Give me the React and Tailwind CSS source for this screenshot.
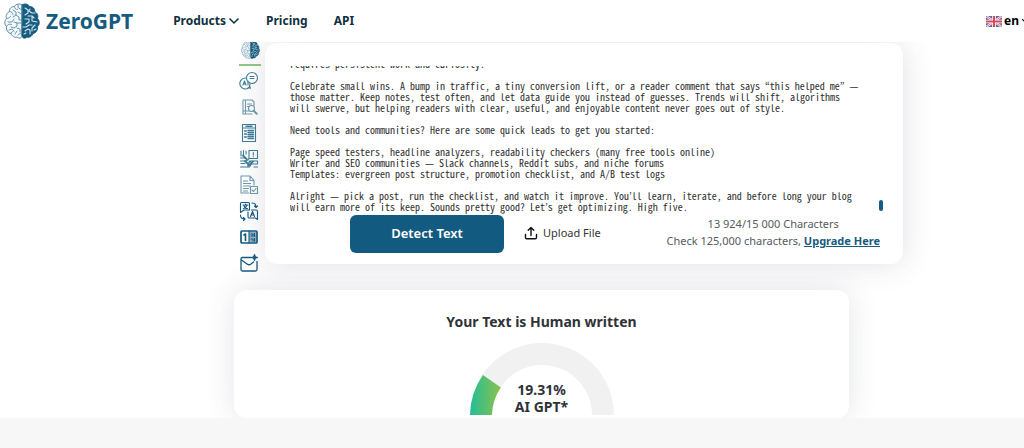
import React, { useEffect, useRef } from "react";

const text = `requires persistent work and curiosity.

Celebrate small wins. A bump in traffic, a tiny conversion lift, or a reader comment that says “this helped me” —
those matter. Keep notes, test often, and let data guide you instead of guesses. Trends will shift, algorithms
will swerve, but helping readers with clear, useful, and enjoyable content never goes out of style.

Need tools and communities? Here are some quick leads to get you started:

Page speed testers, headline analyzers, readability checkers (many free tools online)
Writer and SEO communities — Slack channels, Reddit subs, and niche forums
Templates: evergreen post structure, promotion checklist, and A/B test logs

Alright — pick a post, run the checklist, and watch it improve. You’ll learn, iterate, and before long your blog
will earn more of its keep. Sounds pretty good? Let’s get optimizing. High five.`;

const Brain = ({ className }) => (
  <svg viewBox="0 0 36 36" className={className} fill="none" strokeLinecap="round" strokeLinejoin="round" aria-hidden="true">
    <path
      d="M17.5 1.5C14 0 11 2 10.5 3.5 7 3.500 5 6 5.500 8.500 2.500 10 1.500 13 2.500 15.500 0 18 .5 22 2.500 23.500 2 27 4 30 7 30.500 8 33.500 11 35 13 34 15 36 17.500 35 17.500 34Z"
      fill="#f3f8fa"
      stroke="#5a8da6"
      strokeWidth="1"
    />
    <path
      d="M10.500 3.500c0 2 1 3 3 3M14 2v2.500l3 2M5.500 8.500c2 0 3 1 3.500 3M9 7l3 2v3l-3 2M2.500 15.500c2 0 3-1 4-2M14 9l3 2M12 12l3 2v3h2M4 19h4l2-3M2.500 23.500c1-2 3-3 5-2M10 19l3 1v3l-3 2-3-1M13 20h4M5 27l3-1 2 2M7 30.500c0-1 1-2 2-2M13 25l3 1v3M11 31l2-3M14 32l3-2"
      stroke="#5a8da6"
      strokeWidth=".9"
    />
    <path
      d="M18.500 1.500C22 0 25 2 25.500 3.500 29 3.500 31 6 30.500 8.500 33.500 10 34.500 13 33.500 15.500 36 18 35.500 22 33.500 23.500 34 27 32 30 29 30.500 28 33.500 25 35 23 34 21 36 18.500 35 18.500 34Z"
      fill="#165b80"
      stroke="#165b80"
    />
    <path
      d="M21 5l3 2v3l-3 2M26 6l-1 2 3 2h3M24 13h4l2 2M21 16h4v3l-3 2M28 14v4l5 1M19 24h3l3-2h3M31 22l-3 3v3M21 28l3-2 2 1v4M20 31l2-1M32 26l-2 1"
      stroke="#d5e6ed"
      strokeWidth="1.100"
    />
  </svg>
);

const tools = [
  {
    name: "AI chat",
    icon: (
      <>
        <circle cx="13" cy="7" r="5.500" />
        <path d="M11 5.500h4M11 7.500h4M6.500 7A5.500 5.500 0 1 0 11 15.500M11 12.500c0 1-.2 2-.6 2.700l1.100 2-2.500-.7" />
        <path d="M4 14l1.500-4L7 14M4.500 13h2M9 10v4" />
      </>
    ),
  },
  {
    name: "Plagiarism checker",
    color: "text-[#6d9bb1]",
    icon: (
      <>
        <path d="M13 17H4V3h9l2 2v4M6.500 3v13.500M8.500 7h4M8.500 9.500h2M4 14h6" />
        <circle cx="12.500" cy="11.500" r="3" fill="#fff" />
        <path d="M14.700 13.700l3 3" strokeWidth="2" />
      </>
    ),
  },
  {
    name: "Summarizer",
    icon: (
      <>
        <path d="M3.500 1.500h13v17h-13zM3.500 5h13" />
        <path d="M5.500 8h2M5.500 11h2M5.500 14h2M9 7.500h5.500M9 9.500h5.500M9 11.500h5.500M9 13.500h5.500M9 15.500h5.500M7 3.300h6" strokeWidth="1.400" />
      </>
    ),
  },
  {
    name: "Paraphraser",
    icon: (
      <>
        <path d="M10 1.500h8.500v8H10zM14.300 3.500v2.500M14.300 7.500v.3M2 2v5M4.500 1.500v5M7 2v3M1.500 9h5M1.500 12h6l2-2M2 14.500h4M1.500 18h9l2-3h6M10 12h8.500M9.500 14l2-1.500M15 18h3.500M18.500 12v2" />
        <path d="M4 6.500l3.500 3.500M9 17l5-4.500M6 12l3 3" strokeWidth="1.800" />
      </>
    ),
  },
  {
    name: "Grammar checker",
    color: "text-[#6d9bb1]",
    icon: (
      <>
        <path d="M15 10V5.500L11 1H2v17h8M11 1v4.500h4M4.500 6h4M4.500 8.500h7M4.500 11h7M4.500 13.500h5M4.500 16h4" />
        <rect x="11.500" y="11.500" width="7" height="7" />
        <path d="M13 15l1.500 1.500 2.500-3" />
      </>
    ),
  },
  {
    name: "Translator",
    color: "text-[#165b80]",
    icon: (
      <>
        <path d="M2.500 1.500h7a1 1 0 0 1 1 1V9H5l-3.500 2.500v-9a1 1 0 0 1 1-1zM12.500 9H17a1.500 1.500 0 0 1 1.500 1.500v8l-2-1.500H10a1 1 0 0 1-1-1v-5" />
        <path d="M4 4h5M6.500 3v1M8 4c-.5 2-2 3-3.500 3.500M5 5c.5 1.500 2 2.500 3.500 2.500M11.500 15.500l2-5 2 5M12.300 14h2.500M13 2c2.500 0 4 1 4 4M15.500 5L17 6.500 18.500 5M1.500 14c0 2.500 1.500 4 4 4M4.500 16.500L6 18l-1.500 1.500" />
      </>
    ),
  },
  {
    name: "Word counter",
    color: "text-[#165b80]",
    icon: (
      <>
        <path d="M10 4.500h7.500v11H10z" fill="#8db3c4" stroke="none" />
        <rect x="2" y="4" width="16" height="12" rx="1" strokeWidth="1.700" />
        <path d="M5 8l1.500-1v6.500" strokeWidth="1.600" />
        <path d="M10 4v12M12 7h2v2h-2M15.500 6.500v3M12 12h2v2M15.500 11.500v2.500" />
      </>
    ),
  },
  {
    name: "Email helper",
    color: "text-[#165b80]",
    icon: (
      <>
        <path d="M12 4.500H3.500A1.500 1.500 0 0 0 2 6v10.500A1.500 1.500 0 0 0 3.500 18h13a1.500 1.500 0 0 0 1.500-1.500V8.500M2.500 7l5.500 4q2 1.500 4 0l2.500-2" strokeWidth="1.300" />
        <path d="M15.500 1.500l.8 2.200 2.200.8-2.200.8-.8 2.200-.8-2.200-2.200-.8 2.200-.8z" fill="currentColor" />
      </>
    ),
  },
];

const Chevron = ({ className }) => (
  <svg viewBox="0 0 12 8" className={className} fill="none" stroke="currentColor" strokeWidth="1.500" aria-hidden="true">
    <path d="M1.500 1.500L6 6l4.500-4.500" />
  </svg>
);

const Header = () => (
  <header className="relative z-10 flex h-[42px] items-center overflow-hidden bg-white pl-1 text-[#12303f]">
    <a href="#home" className="flex items-center gap-[6px] text-[#165b80]">
      <Brain className="h-9 w-9" />
      <span className="text-[21px] leading-7 font-bold">ZeroGPT</span>
    </a>
    <nav className="ml-10 flex items-center gap-[26px] text-[12px] font-bold">
      <button type="button" className="flex items-center gap-[2px] font-bold">
        Products
        <Chevron className="h-2 w-3" />
      </button>
      <a href="#pricing">Pricing</a>
      <a href="#api">API</a>
    </nav>
    <button type="button" className="-mr-[6px] ml-auto flex shrink-0 items-center gap-[2px] text-[12px] font-bold text-black">
      <svg viewBox="0 0 16 11" className="h-[11px] w-4" aria-hidden="true">
        <path d="M0 0h16v11H0z" fill="#5b68a5" />
        <path d="M0 0l16 11M16 0L0 11" stroke="#fff" strokeWidth="2.200" />
        <path d="M0 0l16 11M16 0L0 11" stroke="#d9485a" strokeWidth=".8" />
        <path d="M8 0v11M0 5.500h16" stroke="#fff" strokeWidth="3.600" />
        <path d="M8 0v11M0 5.500h16" stroke="#d9485c" strokeWidth="2" />
      </svg>
      en
      <Chevron className="h-[6px] w-[9px]" />
    </button>
  </header>
);

const Sidebar = () => (
  <aside className="-mb-4 flex w-[22px] shrink-0 flex-col">
    <a href="#detector" aria-label="AI detector" className="-mt-[2px] flex justify-center border-b-2 border-[#8ccb86] pb-[5px]">
      <Brain className="h-[19px] w-[19px]" />
    </a>
    <div className="mt-[5px] flex flex-col gap-[6px]">
      {tools.map((tool) => (
        <a key={tool.name} href="#tool" aria-label={tool.name} className={tool.color || "text-[#3f7c99]"}>
          <svg viewBox="0 0 20 20" className="h-5 w-5" fill="none" stroke="currentColor" strokeWidth="1.100" strokeLinecap="round" strokeLinejoin="round">
            {tool.icon}
          </svg>
        </a>
      ))}
    </div>
  </aside>
);

const Editor = () => {
  const boxRef = useRef(null);

  // start a little below the first line
  useEffect(() => {
    boxRef.current.scrollTop = 8;
  }, []);

  return (
    <section className="mt-px min-w-0 flex-1 rounded-xl bg-white pt-[23px] pr-5 pb-[11px] pl-[25px] shadow-[0_0_30px_rgba(60,64,90,0.16)]">
      <div className="flex items-end">
        <textarea
          ref={boxRef}
          aria-label="Text to check"
          wrap="off"
          defaultValue={text}
          className="h-[149px] min-w-0 flex-1 resize-none overflow-hidden pb-[11px] font-['Noto_Sans_Mono_CJK_KR','Liberation_Mono',monospace] text-[10px] leading-[11px] text-[#2f2f2f] outline-none"
        />
        <span className="mb-1 h-[11px] w-1 rounded-full bg-[#165b80]" />
      </div>
      <div className="flex items-start">
        <button type="button" className="ml-[60px] h-[38px] w-[154px] rounded-md bg-[#125a80] text-[13px] font-semibold text-white">
          Detect Text
        </button>
        <button type="button" className="mt-[9px] ml-5 flex items-center gap-[5px] text-[11px] leading-[18px] text-[#333]">
          <svg viewBox="0 0 14 14" className="h-[14px] w-[14px]" fill="none" stroke="#111" strokeWidth="1.400" strokeLinecap="round" strokeLinejoin="round" aria-hidden="true">
            <path d="M1.500 8.500v3a1.200 1.200 0 0 0 1.200 1.200h8.600a1.200 1.200 0 0 0 1.200-1.200v-3M7 9.500V1.500M4.200 4.200L7 1.400l2.800 2.800" />
          </svg>
          Upload File
        </button>
        <div className="mr-[3px] ml-auto text-center text-[11px] leading-[17px] text-[#555b60]">
          <p>13 924/15 000 Characters</p>
          <p>
            Check 125,000 characters,{" "}
            <a href="#upgrade" className="font-bold text-[#165b80] underline">
              Upgrade Here
            </a>
          </p>
        </div>
      </div>
    </section>
  );
};

const Result = () => (
  <section className="relative mt-[26px] mr-[175px] ml-[234px] flex flex-col items-center rounded-xl bg-white pt-[22px] pb-[3px] shadow-[0_0_30px_rgba(60,64,90,0.14)]">
    <h2 className="text-[14px] leading-5 font-bold text-[#2f3337]">Your Text is Human written</h2>
    <div className="relative mt-[11px]">
      <svg viewBox="0 0 144 72" className="h-[72px] w-36" aria-hidden="true">
        <defs>
          <linearGradient id="score" x1="0" x2="1">
            <stop offset="0" stopColor="#25bc97" />
            <stop offset="1" stopColor="#8bc34a" />
          </linearGradient>
        </defs>
        <path d="M0 72A72 72 0 0 1 144 72H122A50 50 0 0 0 22 72Z" fill="#f1f1f1" />
        <path d="M0 72A72 72 0 0 1 12.900 32L30.900 44.500A50 50 0 0 0 22 72Z" fill="url(#score)" />
      </svg>
      <p className="absolute inset-x-0 bottom-0 text-center text-[14px] leading-[17px] font-bold text-[#2f3337]">
        19.31%
        <br />
        AI GPT*
      </p>
    </div>
  </section>
);

const App = () => {
  return (
    <div className="flex min-h-screen flex-col overflow-hidden bg-white font-['Noto_Sans','Open_Sans',sans-serif]">
      <Header />
      <main>
        <div className="flex items-start gap-1 pr-[121px] pl-[239px]">
          <Sidebar />
          <Editor />
        </div>
        <Result />
      </main>
      <footer className="relative min-h-[30px] flex-1 bg-[#f7f7f7]" />
    </div>
  );
};

export default App;
